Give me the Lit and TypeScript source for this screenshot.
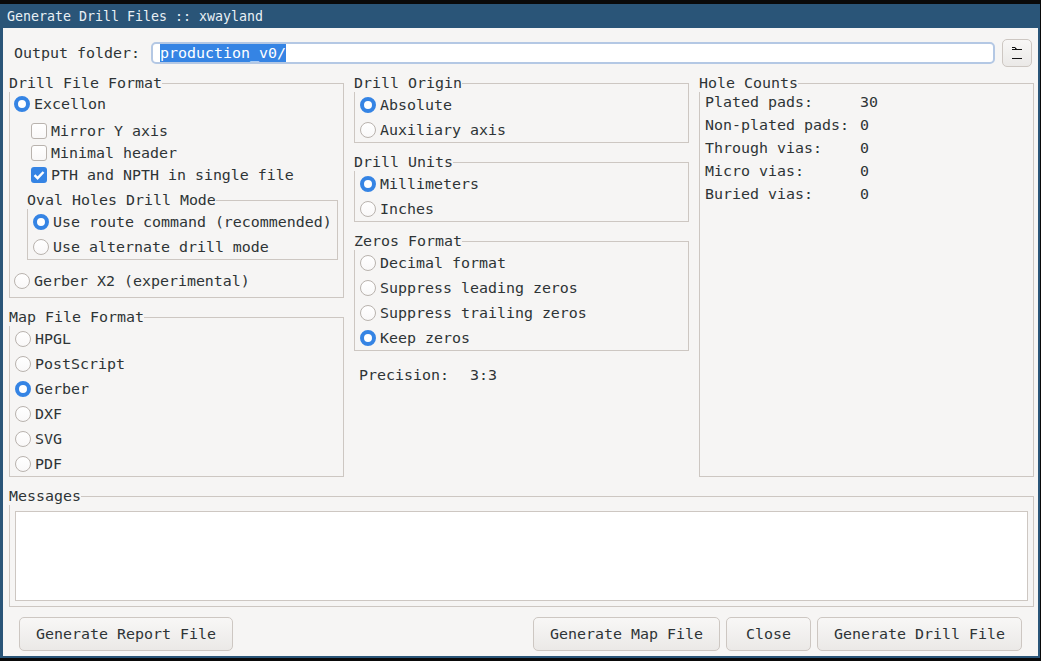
import { css, html, LitElement, type TemplateResult } from "lit";
import { customElement } from "lit/decorators.js";

const radio = (label: string, on = false): TemplateResult => html`
  <div class="radio-row">
    <span class="radio ${on ? "on" : ""}"></span><span class="text">${label}</span>
  </div>
`;

const check = (label: string, on = false): TemplateResult => html`
  <div class="check-row">
    <span class="check ${on ? "on" : ""}">
      ${on
        ? html`<svg width="16" height="16" viewBox="0 0 16 16"><path d="M3.5 8.2 6.6 11.2 12.5 5" fill="none" stroke="#fff" stroke-width="2.4"/></svg>`
        : ""}
    </span><span>${label}</span>
  </div>
`;

const counts: [string, string][] = [
  ["Plated pads:", "30"],
  ["Non-plated pads:", "0"],
  ["Through vias:", "0"],
  ["Micro vias:", "0"],
  ["Buried vias:", "0"],
];

@customElement("app-root")
export class AppRoot extends LitElement {
  static override styles = css`
    :host {
      display: block;
      width: 1041px;
      height: 661px;
      box-sizing: border-box;
      padding: 4px 1px 3px 0;
      background: #0a0a0a;
      font: 14.95px/18px "DejaVu Sans Mono", monospace;
      color: #2e3436;
      overflow: hidden;
    }
    .window {
      height: 100%;
      display: flex;
      flex-direction: column;
      background: #2a5578;
      padding: 0 2px 2px 3px;
      box-sizing: border-box;
    }
    .title {
      height: 24px;
      flex: none;
      padding-left: 4px;
      font-size: 13.29px;
      line-height: 25px;
      color: #e8f0f5;
    }
    .body {
      flex: 1;
      display: flex;
      flex-direction: column;
      background: #f6f5f4;
      padding: 0 4px 0 6px;
    }
    .folder {
      display: flex;
      align-items: center;
      height: 28px;
      margin-top: 11px;
      padding-left: 5px;
    }
    .folder-label {
      width: 137px;
      flex: none;
    }
    .input {
      width: 844px;
      height: 22px;
      box-sizing: border-box;
      flex: none;
      padding-left: 7px;
      background: #fff;
      border: 2px solid #b4c8e4;
      border-radius: 5px;
      line-height: 18px;
    }
    .selected {
      background: #3584e4;
      color: #fff;
    }
    .browse {
      width: 30px;
      height: 28px;
      box-sizing: border-box;
      flex: none;
      margin-left: 7px;
      padding: 0;
      display: flex;
      align-items: center;
      justify-content: center;
    }
    button {
      font: inherit;
      color: inherit;
      background: linear-gradient(#f8f7f6, #ebe9e7);
      border: 1px solid #cdc7c2;
      border-radius: 5px;
    }
    .columns {
      display: grid;
      grid-template-columns: 335px 335px 335px;
      column-gap: 10px;
      height: 403px;
      margin-top: 7px;
    }
    .stack {
      display: flex;
      flex-direction: column;
      min-height: 0;
    }
    fieldset {
      margin: 0;
      padding: 0 0 0 4px;
      min-width: 0;
      border: 1px solid #cdc7c2;
      box-sizing: border-box;
    }
    legend {
      padding: 0;
      margin-left: -5px;
      height: 18px;
    }
    .drill-format {
      height: 224px;
    }
    .map-format {
      height: 169px;
      margin-top: 10px;
    }
    .origin,
    .units {
      height: 69px;
    }
    .units,
    .zeros {
      margin-top: 10px;
    }
    .zeros {
      height: 119px;
    }
    .counts {
      height: 403px;
      padding: 0 5px;
    }
    .counts legend,
    .messages legend {
      margin-left: -6px;
    }
    .radio-row {
      display: flex;
      align-items: center;
      height: 25px;
      column-gap: 4px;
    }
    .radio-row .radio {
      margin-left: 1px;
    }
    .radio-row .text {
      padding-top: 1px;
    }
    .radio {
      width: 16px;
      height: 16px;
      box-sizing: border-box;
      flex: none;
      border: 1px solid #b9b3ae;
      border-radius: 50%;
      background: linear-gradient(#fff, #f9f8f8);
    }
    .radio.on {
      border: 4px solid #3584e4;
      background: #fff;
    }
    .excellon .radio-row,
    .gerber .radio-row {
      height: 24px;
    }
    .excellon .radio,
    .gerber .radio {
      margin-left: 0;
    }
    .excellon .text,
    .gerber .text {
      padding-top: 0;
    }
    .checks {
      margin-top: 4px;
      padding-left: 17px;
    }
    .check-row {
      display: flex;
      align-items: center;
      height: 22px;
      column-gap: 4px;
    }
    .check {
      width: 16px;
      height: 16px;
      box-sizing: border-box;
      flex: none;
      border: 1px solid #b9b3ae;
      border-radius: 3px;
      background: linear-gradient(#fff, #f9f8f8);
    }
    .check.on {
      border: none;
      background: #3584e4;
    }
    .oval {
      width: 311px;
      height: 69px;
      margin: 5px 0 0 13px;
    }
    .gerber {
      margin-top: 9px;
    }
    .precision {
      display: grid;
      grid-template-columns: 111px auto;
      margin-top: 15px;
      padding-left: 5px;
    }
    .count-row {
      display: grid;
      grid-template-columns: 155px auto;
      box-sizing: border-box;
      height: 23px;
      padding-top: 1px;
    }
    .messages {
      height: 120px;
      margin-top: 10px;
      padding: 0 5px;
      width: 1025px;
    }
    .log {
      height: 90px;
      margin-top: 6px;
      box-sizing: border-box;
      background: #fff;
      border: 1px solid #cdc7c2;
    }
    .actions {
      display: flex;
      height: 34px;
      margin-top: 10px;
      padding: 0 12px 0 10px;
      column-gap: 6px;
    }
    .actions button {
      padding: 0;
      height: 34px;
    }
    .report {
      width: 214px;
      margin-right: auto;
    }
    .map {
      width: 187px;
    }
    .close {
      width: 85px;
    }
    .drill {
      width: 205px;
    }
  `;

  protected override render(): TemplateResult {
    return html`
      <div class="window">
        <div class="title">Generate Drill Files :: xwayland</div>
        <div class="body">
          <div class="folder">
            <span class="folder-label">Output folder:</span>
            <div class="input"><span class="selected">production_v0/</span></div>
            <button class="browse">
              <svg width="12" height="14" viewBox="0 0 12 14">
                <path d="M1 3.5h10M1 12.5h10M1 1.5h3.5M4 2.5h1.5" stroke="#111" fill="none"/>
              </svg>
            </button>
          </div>
          <div class="columns">
            <div class="stack">
              <fieldset class="drill-format">
                <legend>Drill File Format</legend>
                <div class="excellon">${radio("Excellon", true)}</div>
                <div class="checks">
                  ${check("Mirror Y axis")}
                  ${check("Minimal header")}
                  ${check("PTH and NPTH in single file", true)}
                </div>
                <fieldset class="oval">
                  <legend>Oval Holes Drill Mode</legend>
                  ${radio("Use route command (recommended)", true)}
                  ${radio("Use alternate drill mode")}
                </fieldset>
                <div class="gerber">${radio("Gerber X2 (experimental)")}</div>
              </fieldset>
              <fieldset class="map-format">
                <legend>Map File Format</legend>
                ${radio("HPGL")}
                ${radio("PostScript")}
                ${radio("Gerber", true)}
                ${radio("DXF")}
                ${radio("SVG")}
                ${radio("PDF")}
              </fieldset>
            </div>
            <div class="stack">
              <fieldset class="origin">
                <legend>Drill Origin</legend>
                ${radio("Absolute", true)}
                ${radio("Auxiliary axis")}
              </fieldset>
              <fieldset class="units">
                <legend>Drill Units</legend>
                ${radio("Millimeters", true)}
                ${radio("Inches")}
              </fieldset>
              <fieldset class="zeros">
                <legend>Zeros Format</legend>
                ${radio("Decimal format")}
                ${radio("Suppress leading zeros")}
                ${radio("Suppress trailing zeros")}
                ${radio("Keep zeros", true)}
              </fieldset>
              <div class="precision"><span>Precision:</span><span>3:3</span></div>
            </div>
            <fieldset class="counts">
              <legend>Hole Counts</legend>
              ${counts.map(
                ([name, value]) => html`<div class="count-row"><span>${name}</span><span>${value}</span></div>`,
              )}
            </fieldset>
          </div>
          <fieldset class="messages">
            <legend>Messages</legend>
            <div class="log"></div>
          </fieldset>
          <div class="actions">
            <button class="report">Generate Report File</button>
            <button class="map">Generate Map File</button>
            <button class="close">Close</button>
            <button class="drill">Generate Drill File</button>
          </div>
        </div>
      </div>
    `;
  }
}
